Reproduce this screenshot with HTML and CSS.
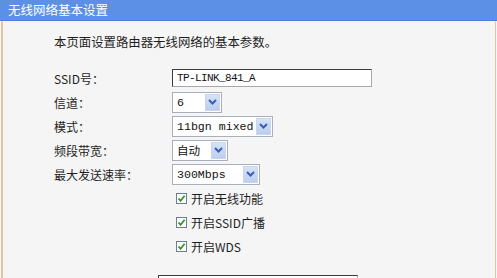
FILE: index.html
```html
<!DOCTYPE html>
<html lang="zh-CN">
<head>
  <meta charset="UTF-8">
  <title>无线网络基本设置</title>
  <link rel="stylesheet" href="styles.css">
</head>
<body>
  <div class="titlebar">无线网络基本设置</div>
  <div class="panel">
    <p class="intro">本页面设置路由器无线网络的基本参数。</p>
    <div class="form">
      <span class="lbl">SSID号：</span>
      <div class="ctl"><input class="txt" type="text" value="TP-LINK_841_A"></div>

      <span class="lbl">信道：</span>
      <div class="ctl">
        <div class="select w-ch"><span class="val">6</span><span class="btn"><svg width="9" height="6" viewBox="0 0 9 6"><path d="M1 1 L4.5 4.5 L8 1" fill="none" stroke="#3a5fb0" stroke-width="2"/></svg></span></div>
      </div>

      <span class="lbl">模式：</span>
      <div class="ctl">
        <div class="select w-mode"><span class="val">11bgn mixed</span><span class="btn"><svg width="9" height="6" viewBox="0 0 9 6"><path d="M1 1 L4.5 4.5 L8 1" fill="none" stroke="#3a5fb0" stroke-width="2"/></svg></span></div>
      </div>

      <span class="lbl">频段带宽：</span>
      <div class="ctl">
        <div class="select w-bw"><span class="val">自动</span><span class="btn"><svg width="9" height="6" viewBox="0 0 9 6"><path d="M1 1 L4.5 4.5 L8 1" fill="none" stroke="#3a5fb0" stroke-width="2"/></svg></span></div>
      </div>

      <span class="lbl">最大发送速率：</span>
      <div class="ctl">
        <div class="select w-rate"><span class="val">300Mbps</span><span class="btn"><svg width="9" height="6" viewBox="0 0 9 6"><path d="M1 1 L4.5 4.5 L8 1" fill="none" stroke="#3a5fb0" stroke-width="2"/></svg></span></div>
      </div>

      <span class="lbl"></span>
      <div class="ctl chk"><span class="cb"><svg width="9" height="9" viewBox="0 0 9 9"><path d="M1.5 4.5 L3.6 6.8 L7.6 1.8" fill="none" stroke="#2e9a2e" stroke-width="1.8"/></svg></span>开启无线功能</div>

      <span class="lbl"></span>
      <div class="ctl chk"><span class="cb"><svg width="9" height="9" viewBox="0 0 9 9"><path d="M1.5 4.5 L3.6 6.8 L7.6 1.8" fill="none" stroke="#2e9a2e" stroke-width="1.8"/></svg></span>开启SSID广播</div>

      <span class="lbl"></span>
      <div class="ctl chk"><span class="cb"><svg width="9" height="9" viewBox="0 0 9 9"><path d="M1.5 4.5 L3.6 6.8 L7.6 1.8" fill="none" stroke="#2e9a2e" stroke-width="1.8"/></svg></span>开启WDS</div>
    </div>
    <div class="row-wds">
      <span class="lbl-wds">(桥接的)SSID：</span>
      <input class="txt" type="text" value="">
    </div>
  </div>
</body>
</html>
```

FILE: styles.css
```css
body {
  margin: 0;
  height: 278px;
  background: #f5f5f5;
  font-family: 'Noto Sans CJK SC', sans-serif;
  font-size: 12px;
  color: #1e1e1e;
  overflow: hidden;
}
.titlebar {
  height: 20px;
  line-height: 20px;
  padding-left: 8px;
  background: #5c8fe6;
  border-bottom: 1px solid #4f80d8;
  color: #fff;
  font-size: 12.5px;
}
.panel {
  margin: 0 1px;
  height: 257px;
  overflow: hidden;
  border-top: 1px solid #e9f1fb;
  border-left: 2px solid #dcc6a4;
  border-right: 1px solid #dcc6a4;
  background: #f5f5f5;
  padding: 12px 0 0 51px;
  box-sizing: border-box;
}
.intro {
  margin: 0;
  height: 16px;
  line-height: 16px;
  font-size: 12.4px;
}
.form {
  margin-top: 16px;
  display: grid;
  grid-template-columns: 118px auto;
  grid-auto-rows: 24px;
  align-items: center;
}
.lbl {
  font-size: 12px;
}
.ctl {
  display: flex;
  align-items: center;
}
.txt {
  box-sizing: border-box;
  width: 200px;
  height: 18px;
  margin: 0;
  padding: 0 4px;
  border: 1px solid #2b2b2b;
  border-color: #3c3c3c #a8a8a8 #a8a8a8 #3c3c3c;
  background: #fff;
  font-family: 'Liberation Mono', 'Noto Sans CJK SC', monospace;
  font-size: 11px;
  letter-spacing: -0.6px;
  color: #111;
  outline: none;
}
.select {
  box-sizing: border-box;
  height: 21px;
  display: flex;
  align-items: center;
  border: 1px solid #a9b0ba;
  background: #fff;
  padding: 1px;
}
.select .val {
  flex: 1;
  padding-left: 3px;
  font-family: 'Liberation Mono', 'Noto Sans CJK SC', monospace;
  font-size: 11.6px;
  color: #111;
  white-space: nowrap;
}
.select .btn {
  width: 15px;
  height: 17px;
  display: flex;
  align-items: center;
  justify-content: center;
  background: linear-gradient(#d6e2f7, #bccdec);
  border: 1px solid #c9d6ee;
  box-sizing: border-box;
}
.w-ch { width: 50px; }
.w-mode { width: 101px; }
.w-bw { width: 56px; }
.w-rate { width: 88px; }
.chk {
  padding-left: 4px;
  font-size: 12px;
}
.cb {
  box-sizing: border-box;
  width: 11px;
  height: 11px;
  margin-right: 4px;
  border: 1px solid #6f7d8c;
  background: #fff;
  display: flex;
  align-items: center;
  justify-content: center;
}
.row-wds {
  margin-top: 17px;
  display: flex;
  align-items: flex-start;
}
.lbl-wds {
  width: 104px;
  color: #d4d4d4;
}
```
